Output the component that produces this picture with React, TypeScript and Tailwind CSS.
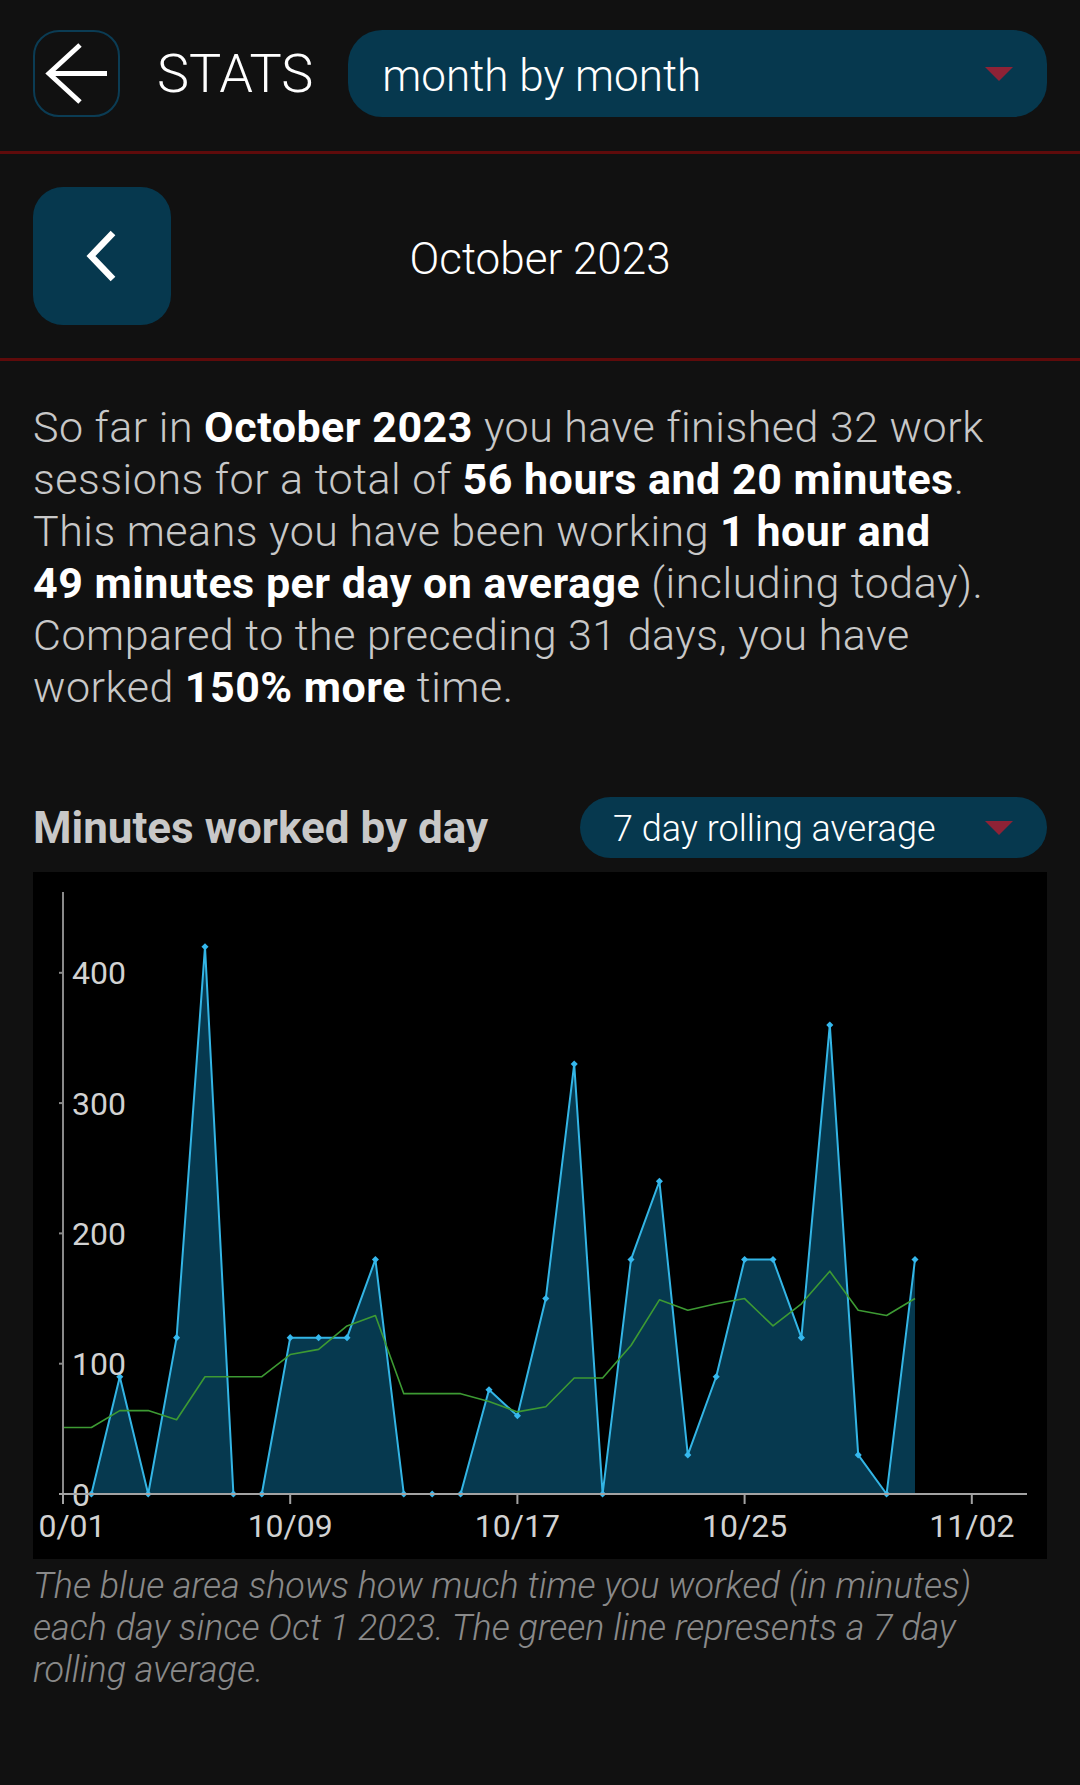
import React from 'react'

// minutes worked per day, index 1 = Oct 2 (Oct 1 sits on the y axis)
const minutes = [
  0, 90, 0, 120, 420, 0, 0, 120, 120, 120, 180, 0, 0, 0, 80, 60, 150, 330, 0, 180,
  240, 30, 90, 180, 180, 120, 360, 30, 0, 180,
]

// 7 day rolling average, index 0 = Oct 1
const rolling = [
  51, 51, 64, 64, 57, 90, 90, 90, 107, 111, 129, 137, 77, 77, 77, 71, 63, 67, 89, 89,
  114, 149, 141, 146, 150, 129, 146, 171, 141, 137, 150,
]

const X0 = 30
const DAY = 28.4
const ZERO_Y = 622
const PER_MIN = 1.303

const dayX = (i: number) => X0 + DAY * i
const valY = (v: number) => ZERO_Y - v * PER_MIN

function Triangle() {
  return (
    <svg width="28" height="14" viewBox="0 0 28 14">
      <polygon points="0,0 28,0 14,14" fill="#8e2236" />
    </svg>
  )
}

function B({ children }: { children: React.ReactNode }) {
  return <b className="font-['Roboto'] font-bold text-white">{children}</b>
}

function Chart() {
  const pts = minutes.map((v, k) => [dayX(k + 1), valY(v)] as const)
  const line = pts.map(([x, y]) => `${x},${y}`).join(' ')
  const area = `M${pts[0][0]},${ZERO_Y} L${line.replace(/ /g, ' L')} L${pts[pts.length - 1][0]},${ZERO_Y} Z`
  const avg = rolling.map((v, i) => `${dayX(i)},${valY(v)}`).join(' ')
  const xTicks = [
    { label: '10/01', i: 0 },
    { label: '10/09', i: 8 },
    { label: '10/17', i: 16 },
    { label: '10/25', i: 24 },
    { label: '11/02', i: 32 },
  ]

  return (
    <svg width="1014" height="687" viewBox="0 0 1014 687" className="block">
      {/* area + outline */}
      <path d={area} fill="#06394f" />
      <polyline points={line} fill="none" stroke="#33b5e5" strokeWidth="2" strokeLinejoin="round" />
      {pts.map(([x, y], k) => (
        <rect
          key={k}
          x={x - 2.5}
          y={y - 2.5}
          width="5"
          height="5"
          fill="#35b8ee"
          transform={`rotate(45 ${x} ${y})`}
        />
      ))}

      {/* rolling average */}
      <polyline points={avg} fill="none" stroke="#3d9a33" strokeWidth="1.6" strokeLinejoin="round" />

      {/* y axis */}
      <line x1={X0} y1={20} x2={X0} y2={632} stroke="#8a8a8a" strokeWidth="2" />
      {[0, 100, 200, 300, 400].map((v) => (
        <g key={v}>
          <line x1={26} y1={valY(v)} x2={X0} y2={valY(v)} stroke="#8a8a8a" strokeWidth="2" />
          <text
            x={39}
            y={valY(v) + 11.5}
            fill="#d2d2d2"
            fontSize="32"
            fontFamily="Roboto, sans-serif"
          >
            {v}
          </text>
        </g>
      ))}

      {/* x axis */}
      <line x1={26} y1={ZERO_Y} x2={994} y2={ZERO_Y} stroke="#a3a3a3" strokeWidth="2" />
      {xTicks.map((t) => (
        <g key={t.label}>
          <line x1={dayX(t.i)} y1={ZERO_Y} x2={dayX(t.i)} y2={632} stroke="#a3a3a3" strokeWidth="2" />
          <text
            x={dayX(t.i)}
            y={665}
            fill="#d2d2d2"
            fontSize="32"
            textAnchor="middle"
            fontFamily="Roboto, sans-serif"
          >
            {t.label}
          </text>
        </g>
      ))}
    </svg>
  )
}

export default function App() {
  return (
    <div
      className="w-[1080px] min-h-[1785px] bg-[#111111] text-white"
      style={{ fontFamily: "'Roboto Light', Roboto, 'Noto Sans', sans-serif" }}
    >
      {/* Top bar */}
      <div className="flex items-center px-[33px] pt-[30px] pb-[34px]">
        <button className="w-[87px] h-[87px] shrink-0 rounded-[26px] border-2 border-[#0b3c54] flex items-center justify-center">
          <svg width="87" height="87" viewBox="0 0 87 87" className="shrink-0">
            <path d="M47 15 L16 43.5 L47 72 M16 43.5 L74 43.5" fill="none" stroke="#ffffff" strokeWidth="5" />
          </svg>
        </button>
        <h1 className="ml-[37px] text-[54px] font-light leading-none">STATS</h1>
        <div className="ml-[35px] flex-1 h-[87px] rounded-[34px] bg-[#06384e] flex items-center justify-between pl-[34px] pr-[34px]">
          <span className="text-[44px] font-light leading-none pt-[4px]">month by month</span>
          <Triangle />
        </div>
      </div>
      <div className="h-[3px] bg-[#5f0b0b]" />

      {/* Month switcher */}
      <div className="grid grid-cols-[138px_1fr_138px] items-center px-[33px] py-[33px]">
        <button className="w-[138px] h-[138px] rounded-[30px] bg-[#06384e] flex items-center justify-center">
          <svg width="40" height="56" viewBox="0 0 40 56">
            <path d="M31 5 L9 28 L31 51" fill="none" stroke="#ffffff" strokeWidth="6.5" />
          </svg>
        </button>
        <div className="text-center text-[44px] font-light leading-none pt-[6px]">October 2023</div>
        <div />
      </div>
      <div className="h-[3px] bg-[#5f0b0b]" />

      {/* Summary */}
      <p className="mt-[40px] px-[33px] text-[43px] leading-[52px] tracking-[0.5px] font-light text-[#c8c8c8] whitespace-nowrap">
        So far in <B>October 2023</B> you have finished 32 work
        <br />
        sessions for a total of <B>56 hours and 20 minutes</B>.
        <br />
        This means you have been working <B>1 hour and</B>
        <br />
        <B>49 minutes per day on average</B> (including today).
        <br />
        Compared to the preceding 31 days, you have
        <br />
        worked <B>150% more</B> time.
      </p>

      {/* Chart header */}
      <div className="mt-[84px] px-[33px] flex items-center justify-between">
        <h2 className="font-['Roboto'] text-[44px] font-bold text-[#c8c8c8] leading-none">Minutes worked by day</h2>
        <div className="w-[467px] h-[61px] rounded-full bg-[#06384e] flex items-center justify-between pl-[33px] pr-[34px]">
          <span className="text-[36px] font-light leading-none pt-[2px]">7 day rolling average</span>
          <Triangle />
        </div>
      </div>

      <div className="mt-[14px] mx-[33px] h-[687px] bg-black overflow-hidden">
        <Chart />
      </div>

      <p className="mt-[6px] px-[33px] text-[36px] leading-[42px] italic font-light text-[#8a8a8a] whitespace-nowrap">
        The blue area shows how much time you worked (in minutes)
        <br />
        each day since Oct 1 2023. The green line represents a 7 day
        <br />
        rolling average.
      </p>
    </div>
  )
}
